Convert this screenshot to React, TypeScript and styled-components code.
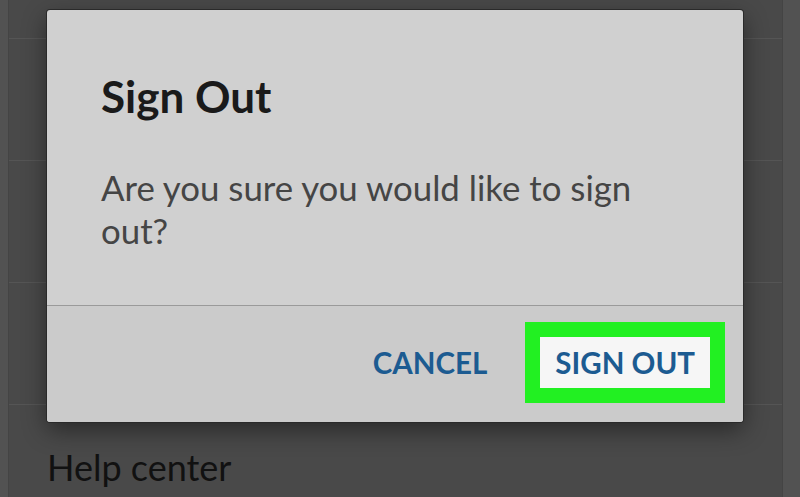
import React from "react";
import styled, { createGlobalStyle } from "styled-components";

const GlobalStyle = createGlobalStyle`
    html, body {
        margin: 0;
        padding: 0;
        background: #4f4f4f;
        font-family: Lato, "Open Sans", sans-serif;
    }
`;

const Screen = styled.div`
    position: relative;
    width: 800px;
    height: 497px;
    overflow: hidden;
    background: #525252;
`;

// the settings list dimmed behind the dialog
const SettingsList = styled.div`
    margin: -83px 0 0 8px;
    width: 773px;
    background: #494949;
    border-left: 1px solid #444;
    border-right: 1px solid #444;
    display: flex;
    flex-direction: column;
`;

const SettingsRow = styled.div`
    height: 122px;
    border-bottom: 1px solid #555;
    padding: 0 38px 37px;
    display: flex;
    align-items: flex-end;
    box-sizing: border-box;
    font-size: 36px;
    color: #111;
`;

const Backdrop = styled.div`
    position: absolute;
    inset: 0;
    display: flex;
    justify-content: flex-start;
    align-items: flex-start;
    padding: 10px 0 0 47px;
`;

const Dialog = styled.div`
    width: 696px;
    height: 412px;
    background: #d0d0d0;
    border-radius: 3px;
    box-shadow: 0 0 0 1px #2a2a2a, 0 8px 24px rgba(0, 0, 0, 0.45);
    display: flex;
    flex-direction: column;
    box-sizing: border-box;
`;

const DialogBody = styled.div`
    height: 296px;
    padding: 60px 54px 0 54px;
    box-sizing: border-box;
    border-bottom: 1px solid #9a9a9a;
`;

const Title = styled.h2`
    margin: 0;
    font-size: 44px;
    font-weight: 700;
    line-height: 52px;
    color: #1a1a1a;
`;

const Message = styled.p`
    margin: 44px 0 0 0;
    font-size: 34.8px;
    line-height: 43px;
    color: #454545;
    width: 570px;
`;

const Footer = styled.div`
    flex: 1;
    background: #cbcbcb;
    display: flex;
    justify-content: flex-end;
    align-items: center;
    gap: 38px;
    padding: 0 18px 4px 0;
    border-radius: 0 0 3px 3px;
`;

const ActionButton = styled.button<{ $highlight?: boolean }>`
    font-family: Lato, "Open Sans", sans-serif;
    font-size: 29.5px;
    font-weight: 700;
    line-height: 35px;
    color: #1c5b91;
    background: ${(p) => (p.$highlight ? "#f6f6f6" : "transparent")};
    border: ${(p) => (p.$highlight ? "15px solid #22f022" : "none")};
    padding: ${(p) => (p.$highlight ? "8px 15px" : "0")};
    cursor: pointer;
`;

export default function App() {
    return (
        <Screen>
            <GlobalStyle />
            <SettingsList>
                <SettingsRow />
                <SettingsRow />
                <SettingsRow />
                <SettingsRow />
                <SettingsRow>Help center</SettingsRow>
            </SettingsList>
            <Backdrop>
                <Dialog>
                    <DialogBody>
                        <Title>Sign Out</Title>
                        <Message>Are you sure you would like to sign out?</Message>
                    </DialogBody>
                    <Footer>
                        <ActionButton>CANCEL</ActionButton>
                        <ActionButton $highlight>SIGN OUT</ActionButton>
                    </Footer>
                </Dialog>
            </Backdrop>
        </Screen>
    );
}
